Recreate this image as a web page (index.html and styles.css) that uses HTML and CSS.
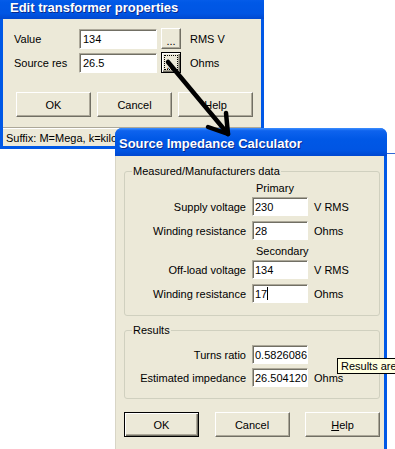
FILE: index.html
```html
<!DOCTYPE html>
<html>
<head>
<meta charset="utf-8">
<link rel="stylesheet" href="styles.css">
</head>
<body>
<div class="desktop">
  <div class="win win-edit">
    <div class="titlebar"><span class="title">Edit transformer properties</span></div>
    <div class="client">
      <div class="form">
        <span class="lbl">Value</span>
        <div class="field field-wide">134</div>
        <button class="btn btn-dots"><span class="dots">...</span></button>
        <span class="unit">RMS V</span>
        <span class="lbl">Source res</span>
        <div class="field field-wide">26.5</div>
        <button class="btn btn-dots btn-focused"><span class="dots focus">...</span></button>
        <span class="unit">Ohms</span>
      </div>
      <div class="btnrow btnrow-edit">
        <button class="btn btn-std">OK</button>
        <button class="btn btn-std">Cancel</button>
        <button class="btn btn-std">Help</button>
      </div>
      <div class="statusbar">Suffix: M=Mega, k=kilo, m=milli, u=micro</div>
    </div>
  </div>

  <div class="bgline"></div>

  <div class="win win-calc">
    <div class="titlebar titlebar-calc"><span class="title">Source Impedance Calculator</span></div>
    <div class="client client-calc">
      <fieldset class="group">
        <legend>Measured/Manufacturers data</legend>
        <div class="row row-head"><span></span><span class="head">Primary</span></div>
        <div class="row"><span class="rlbl">Supply voltage</span><div class="field">230</div><span class="unit">V RMS</span></div>
        <div class="row row-next"><span class="rlbl">Winding resistance</span><div class="field">28</div><span class="unit">Ohms</span></div>
        <div class="row row-head row-head2"><span></span><span class="head">Secondary</span></div>
        <div class="row"><span class="rlbl">Off-load voltage</span><div class="field">134</div><span class="unit">V RMS</span></div>
        <div class="row row-next"><span class="rlbl">Winding resistance</span><div class="field">17<span class="caret"></span></div><span class="unit">Ohms</span></div>
      </fieldset>
      <fieldset class="group group-results">
        <legend>Results</legend>
        <div class="row"><span class="rlbl">Turns ratio</span><div class="field">0.5826086</div><span class="unit"></span></div>
        <div class="row row-next2"><span class="rlbl">Estimated impedance</span><div class="field">26.504120</div><span class="unit">Ohms</span></div>
      </fieldset>
      <div class="btnrow btnrow-calc">
        <button class="btn btn-std btn-default">OK</button>
        <button class="btn btn-std">Cancel</button>
        <button class="btn btn-std"><u>H</u>elp</button>
      </div>
    </div>
  </div>

  <div class="tooltip">Results are estimates</div>

  <svg class="arrow" width="395" height="449" viewBox="0 0 395 449">
    <g stroke="#000" stroke-width="4.5" stroke-linecap="round" stroke-linejoin="round" fill="none">
      <path d="M168 62 L228 134"/>
      <path d="M208 127 L228 134 L226 113"/>
    </g>
  </svg>
</div>
</body>
</html>
```

FILE: styles.css
```css
* { box-sizing: border-box; }
html, body { margin: 0; padding: 0; background: #fff; }
body {
  width: 395px; height: 449px; overflow: hidden;
  font-family: "Liberation Sans", Arial, sans-serif;
  font-size: 11px; color: #000;
}
.desktop { position: relative; width: 395px; height: 449px; overflow: hidden; }

.win {
  position: absolute;
  display: flex; flex-direction: column;
  background: #0058E6;
  border-radius: 7px 7px 0 0;
  padding: 0 3px 3px 3px;
}
.win-edit { left: 0; top: -8px; width: 264px; height: 157px; }
.win-calc { left: 115px; top: 128px; width: 272px; height: 340px; padding: 0 3px 3px 0; }

.titlebar {
  height: 27px; flex: none;
  margin: 0 -3px;
  border-radius: 7px 7px 0 0;
  background: linear-gradient(to bottom, #3C8EFF 0%, #0E63EE 10%, #0058E6 40%, #0055E3 80%, #0048D0 100%);
  display: flex; align-items: center;
  padding: 3px 0 0 10px;
}
.titlebar-calc { margin: 0 -3px 0 0; height: 28px; padding-left: 4px; }
.title {
  color: #fff; font-weight: bold; font-size: 13px;
  text-shadow: 1px 1px 0 #0A2A8C;
  white-space: nowrap;
}

.client { flex: 1; background: #ECE9D8; display: flex; flex-direction: column; }

.form {
  display: grid;
  grid-template-columns: 65px 78px 20px auto;
  grid-template-rows: 21px 21px;
  column-gap: 0;
  row-gap: 3px;
  padding: 9px 0 0 11px;
  align-items: center;
}
.form .btn-dots { margin-left: 4px; }
.form .unit { margin-left: 13px; }

.field {
  background: #fff;
  height: 19px;
  border-top: 1px solid #ACA899;
  border-left: 1px solid #ACA899;
  border-right: 1px solid #fff;
  border-bottom: 1px solid #fff;
  box-shadow: inset 1px 1px 0 #716F64;
  padding: 2px 1px 0 3px;
  line-height: 14px;
  white-space: nowrap; overflow: hidden;
}
.form .field { height: 20px; }
.client-calc .field { padding-left: 2px; }

.btn {
  font: inherit; color: #000;
  background: #ECE9D8;
  border: 1px solid;
  border-color: #fff #716F64 #716F64 #fff;
  box-shadow: inset -1px -1px 0 #ACA899;
  padding: 0; margin: 0;
  display: flex; align-items: center; justify-content: center;
}
.btn-dots { width: 20px; height: 21px; align-items: flex-end; padding-bottom: 3px; }
.btn-focused { border: 1px solid #000; box-shadow: inset 1px 1px 0 #fff, inset -1px -1px 0 #716F64, inset -2px -2px 0 #ACA899; padding: 3px; }
.dots { line-height: 8px; }
.focus { outline: 1px dotted #000; width: 12px; height: 13px; display: flex; align-items: flex-end; justify-content: center; }

.btn-std { width: 75px; height: 25px; }
.btn-default { border: 1px solid #000; box-shadow: inset 1px 1px 0 #fff, inset -1px -1px 0 #716F64, inset -2px -2px 0 #ACA899; }

.btnrow { display: flex; }
.btnrow-edit { gap: 6px; padding: 19px 0 0 13px; }

.statusbar {
  margin-top: 10px;
  height: 19px;
  border-top: 1px solid #ACA899;
  box-shadow: inset 0 1px 0 #fff;
  padding: 4px 0 0 3px;
  white-space: nowrap; overflow: hidden;
}

.client-calc { padding: 0 0 0 8px; border-left: 1px solid #D8D5C6; }

.group {
  margin: 9px 0 0 0;
  width: 256px;
  border: 1px solid #D0D0BF;
  border-radius: 3px;
  padding: 3px 0 12px 0;
  min-width: 0;
}
.group legend { padding: 0 1px; margin-left: 7px; line-height: 13px; }
.group-results { margin-top: 8px; padding: 8px 0 11px 0; }

.row {
  display: grid;
  grid-template-columns: 121px 56px auto;
  column-gap: 6px;
  height: 19px;
  align-items: center;
}
.row-next { margin-top: 5px; }
.row-next2 { margin-top: 4px; }
.row-head { height: 14px; margin-bottom: 2px; }
.row-head2 { margin-top: 4px; }
.rlbl { text-align: right; white-space: nowrap; }
.head { padding-left: 4px; }
.unit { white-space: nowrap; }
.caret { display: inline-block; width: 1px; height: 13px; background: #000; vertical-align: -2px; }

.btnrow-calc { width: 256px; justify-content: space-between; margin-top: 13px; }

.tooltip {
  position: absolute; left: 337px; top: 358px;
  height: 16px;
  background: #FFFFE1; border: 1px solid #000;
  padding: 1px 0 0 3px;
  white-space: nowrap; line-height: 13px;
}
.bgline { position: absolute; left: 386px; top: 153px; width: 20px; height: 1px; background: #3168D5; }
.arrow { position: absolute; left: 0; top: 0; pointer-events: none; }
```
